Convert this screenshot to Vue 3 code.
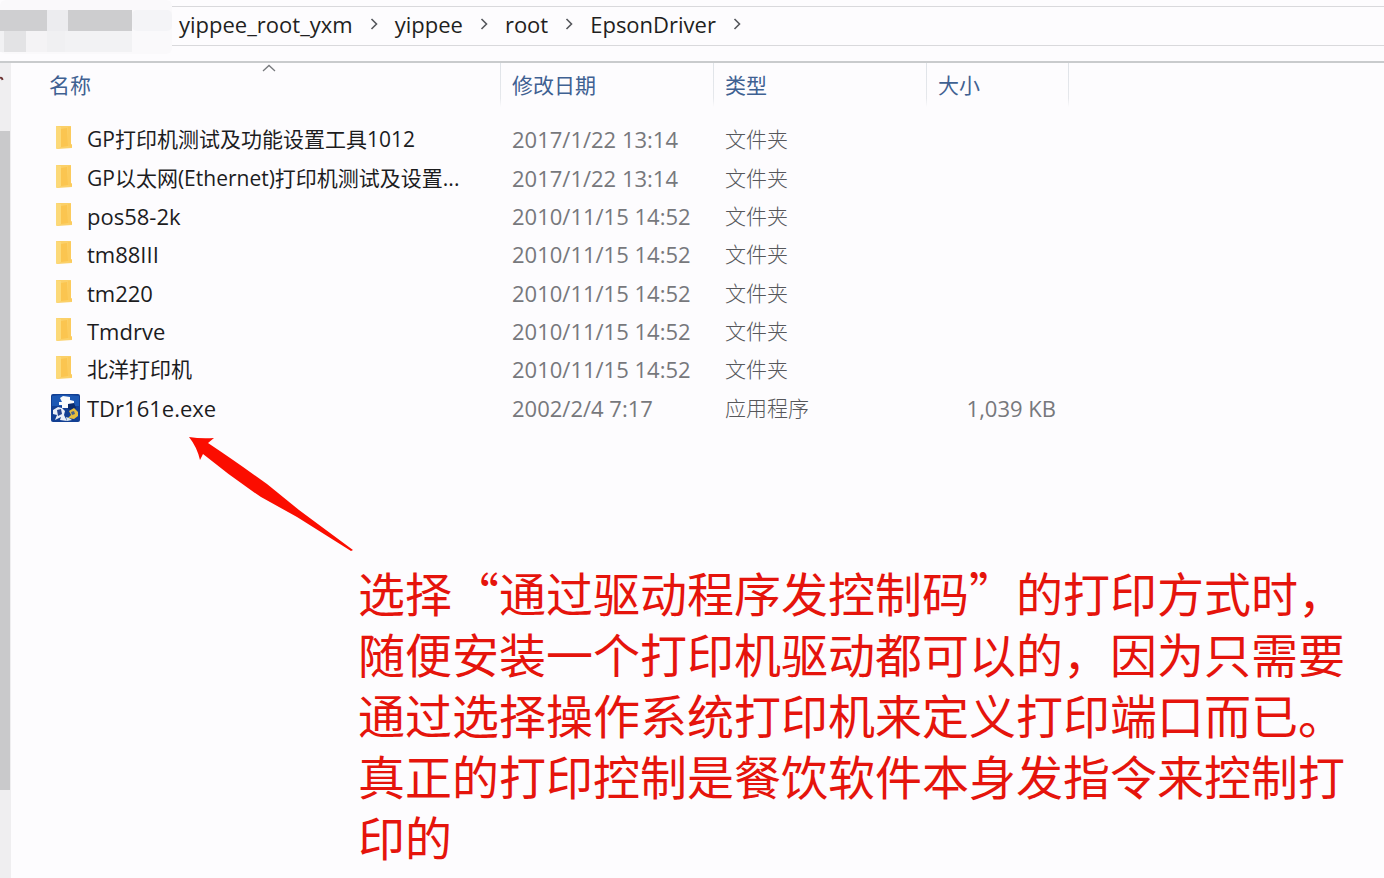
<script setup>
const crumbs = ['yippee_root_yxm', 'yippee', 'root', 'EpsonDriver']

const files = [
  { name: 'GP打印机测试及功能设置工具1012', date: '2017/1/22 13:14', type: '文件夹', size: '', cjk: true },
  { name: 'GP以太网(Ethernet)打印机测试及设置...', date: '2017/1/22 13:14', type: '文件夹', size: '', cjk: true },
  { name: 'pos58-2k', date: '2010/11/15 14:52', type: '文件夹', size: '' },
  { name: 'tm88III', date: '2010/11/15 14:52', type: '文件夹', size: '' },
  { name: 'tm220', date: '2010/11/15 14:52', type: '文件夹', size: '' },
  { name: 'Tmdrve', date: '2010/11/15 14:52', type: '文件夹', size: '' },
  { name: '北洋打印机', date: '2010/11/15 14:52', type: '文件夹', size: '', cjk: true },
  { name: 'TDr161e.exe', date: '2002/2/4 7:17', type: '应用程序', size: '1,039 KB', app: true },
]
</script>

<template>
  <div class="explorer">
    <header class="topbar">
      <svg class="mosaic" viewBox="0 0 172 54" aria-hidden="true">
        <rect width="172" height="54" rx="6" fill="#faf9fb" />
        <rect y="10" width="47" height="21" fill="#cfcfd1" />
        <rect x="47" y="10" width="21" height="21" fill="#ececef" />
        <rect x="68" y="10" width="64" height="21" fill="#cdcdcf" />
        <rect x="132" y="10" width="40" height="21" rx="5" fill="#f4f4f7" />
        <rect y="31" width="4" height="21" fill="#f1f1f3" />
        <rect x="4" y="31" width="22" height="21" fill="#e3e3e5" />
        <rect x="26" y="31" width="21" height="21" fill="#f4f3f5" />
        <rect x="47" y="31" width="18" height="21" fill="#f0f0f2" />
        <rect x="65" y="31" width="67" height="21" fill="#f2f2f4" />
      </svg>
      <nav class="address">
        <template v-for="c in crumbs" :key="c">
          <a href="#" class="crumb">{{ c }}</a>
          <svg class="chev" viewBox="0 0 8 12" aria-hidden="true"><path d="M1.5 1L6.500 6L1.5 11" /></svg>
        </template>
      </nav>
    </header>

    <div class="body">
      <aside class="side">
        <svg class="pin" viewBox="0 0 4 8" aria-hidden="true"><path d="M0 3Q2 2 2.500 5" /></svg>
        <div class="thumb"></div>
      </aside>

      <main class="content">
        <table class="files">
          <colgroup>
            <col class="c-name" /><col class="c-date" /><col class="c-type" /><col class="c-size" />
          </colgroup>
          <thead>
            <tr>
              <th scope="col">
                <button type="button" class="sort">名称</button>
                <svg class="caret" viewBox="0 0 14 8" aria-hidden="true"><path d="M1 7L7 1.500L13 7" /></svg>
              </th>
              <th scope="col"><button type="button" class="sort">修改日期</button></th>
              <th scope="col"><button type="button" class="sort">类型</button></th>
              <th scope="col"><button type="button" class="sort">大小</button></th>
            </tr>
          </thead>
          <tbody>
            <tr v-for="f in files" :key="f.name">
              <td>
                <div class="name">
                  <svg v-if="f.app" class="icon" viewBox="0 0 30 28" aria-hidden="true">
                    <rect x="1" y="0" width="29" height="28" rx="2" fill="#123f93" />
                    <path d="M2 2Q14 0 29 2V12H2Z" fill="#1c58b4" />
                    <path d="M10 4L13 2L20 3L20 6L24 7V10H20V14H12V11H9V8H12L11 6Z" fill="#f8fafc" />
                    <path d="M3 16L8 13L12 14L15 17L14 21L17 27L10 26L11 23L5 26L7 21L3 20Z" fill="#e9eef8" />
                    <path d="M7 16L11 15L12 20L8 22Z" fill="#27458f" />
                    <path d="M18 10L24 9L26 14L22 16L18 15Z" fill="#0a2b6d" />
                    <path d="M19 17L24 14L28 18V22L24 25L18 24L21 21Z" fill="#e5bd3e" />
                    <path d="M21 18L24 17L25 20L22 21Z" fill="#48638a" />
                    <path d="M16 23L19 24L22 26L17 27Z" fill="#dce8ed" />
                  </svg>
                  <svg v-else class="icon" viewBox="0 0 30 28" aria-hidden="true">
                    <path d="M6 1L21 1V19L22 20V23L7 24L6 23Z" fill="#fbd069" />
                    <path d="M6 1L11 2V22L7 24L6 23Z" fill="#fcd978" />
                    <path d="M11 4L17 3L18 21L11 22Z" fill="#fbc550" />
                    <path d="M18 2H21V19L22 20V22L18 21Z" fill="#fccb5c" />
                  </svg>
                  <span :class="{ latin: !f.cjk }">{{ f.name }}</span>
                </div>
              </td>
              <td class="latin">{{ f.date }}</td>
              <td class="kind">{{ f.type }}</td>
              <td class="num latin">{{ f.size }}</td>
            </tr>
          </tbody>
        </table>

        <section class="note">
          <svg class="arrow" viewBox="0 0 164 115" aria-hidden="true">
            <path d="M0 0Q12 2 25 1L19 6Q46 24 78 47L110 73L164 113L162 114L108 80L72 60Q42 40 14 17L11 23Q8 10 0 0Z" fill="#fb0d00" />
          </svg>
          <p class="note-text">选择“通过驱动程序发控制码”的打印方式时，随便安装一个打印机驱动都可以的，因为只需要通过选择操作系统打印机来定义打印端口而已。真正的打印控制是餐饮软件本身发指令来控制打印的</p>
        </section>
      </main>
    </div>
  </div>
</template>

<style>
body {
  margin: 0;
  background: #fdfcfe;
}
</style>

<style scoped>
.explorer {
  display: flex;
  flex-direction: column;
  min-height: 100vh;
  overflow: hidden;
  background: #fdfcfe;
  color: #1c1c1e;
  font-family: "Open Sans", "Noto Sans CJK SC", sans-serif;
  font-size: 21px;
  line-height: 28px;
}
.topbar {
  display: flex;
  align-items: flex-start;
  box-sizing: border-box;
  height: 63px;
  border-bottom: 2px solid #c9cbcd;
}
.mosaic {
  width: 172px;
  height: 54px;
  flex: none;
}
.address {
  flex: 1;
  display: flex;
  align-items: center;
  box-sizing: border-box;
  height: 40px;
  margin-top: 6px;
  padding: 0 0 4px 7px;
  border-top: 1px solid #d9d9dc;
  border-bottom: 1px solid #d9d9dc;
}
.crumb {
  color: #1f1f21;
  font-size: 22px;
  text-decoration: none;
}
.chev {
  width: 8px;
  height: 12px;
  margin: 0 17px;
}
.chev path {
  fill: none;
  stroke: #55575c;
  stroke-width: 1.6;
}
.body {
  flex: 1;
  display: flex;
}
.side {
  flex: none;
  width: 11px;
  background: #efeef0;
}
.pin {
  display: block;
  width: 4px;
  height: 8px;
  margin-top: 12px;
}
.pin path {
  fill: none;
  stroke: #6d3434;
  stroke-width: 2;
}
.thumb {
  width: 10px;
  height: 659px;
  margin-top: 48px;
  background: #c9c9cb;
}
.content {
  flex: 1;
  min-width: 0;
}
.files {
  table-layout: fixed;
  width: 1058px;
  height: 364px;
  border-collapse: collapse;
}
.c-name { width: 490px; }
.c-date { width: 213px; }
.c-type { width: 213px; }
.c-size { width: 142px; }
th {
  position: relative;
  height: 57px;
  padding: 0 0 0 11px;
  vertical-align: top;
  text-align: left;
  background: linear-gradient(#dfe3e8, #e6e8ec 80%, #fdfcfe) right top / 1px 44px no-repeat;
}
th:first-child {
  padding-left: 38px;
}
.sort {
  display: block;
  margin-top: 8px;
  padding: 0;
  border: 0;
  background: none;
  color: #3f6192;
  font: inherit;
  font-weight: 400;
}
.caret {
  position: absolute;
  top: 1px;
  left: 251px;
  width: 14px;
  height: 8px;
}
.caret path {
  fill: none;
  stroke: #77797d;
  stroke-width: 1.3;
}
td {
  padding: 0 0 0 11px;
  color: #77787c;
  white-space: nowrap;
}
td:first-child {
  padding-left: 39px;
  color: #1c1c1e;
}
.kind {
  color: #56575b;
  font-weight: 300;
}
.latin {
  font-size: 22px;
}
.name {
  display: flex;
  align-items: center;
  gap: 7px;
}
.icon {
  flex: none;
  width: 30px;
  height: 28px;
}
.num {
  padding-right: 13px;
  text-align: right;
}
.note {
  margin: 10px 0 0 178px;
}
.arrow {
  display: block;
  width: 164px;
  height: 115px;
}
.note-text {
  width: 21em;
  margin: 9px 0 0 169px;
  color: #e5140c;
  font-family: "Noto Sans CJK SC", sans-serif;
  font-size: 47px;
  line-height: 61px;
}
</style>
